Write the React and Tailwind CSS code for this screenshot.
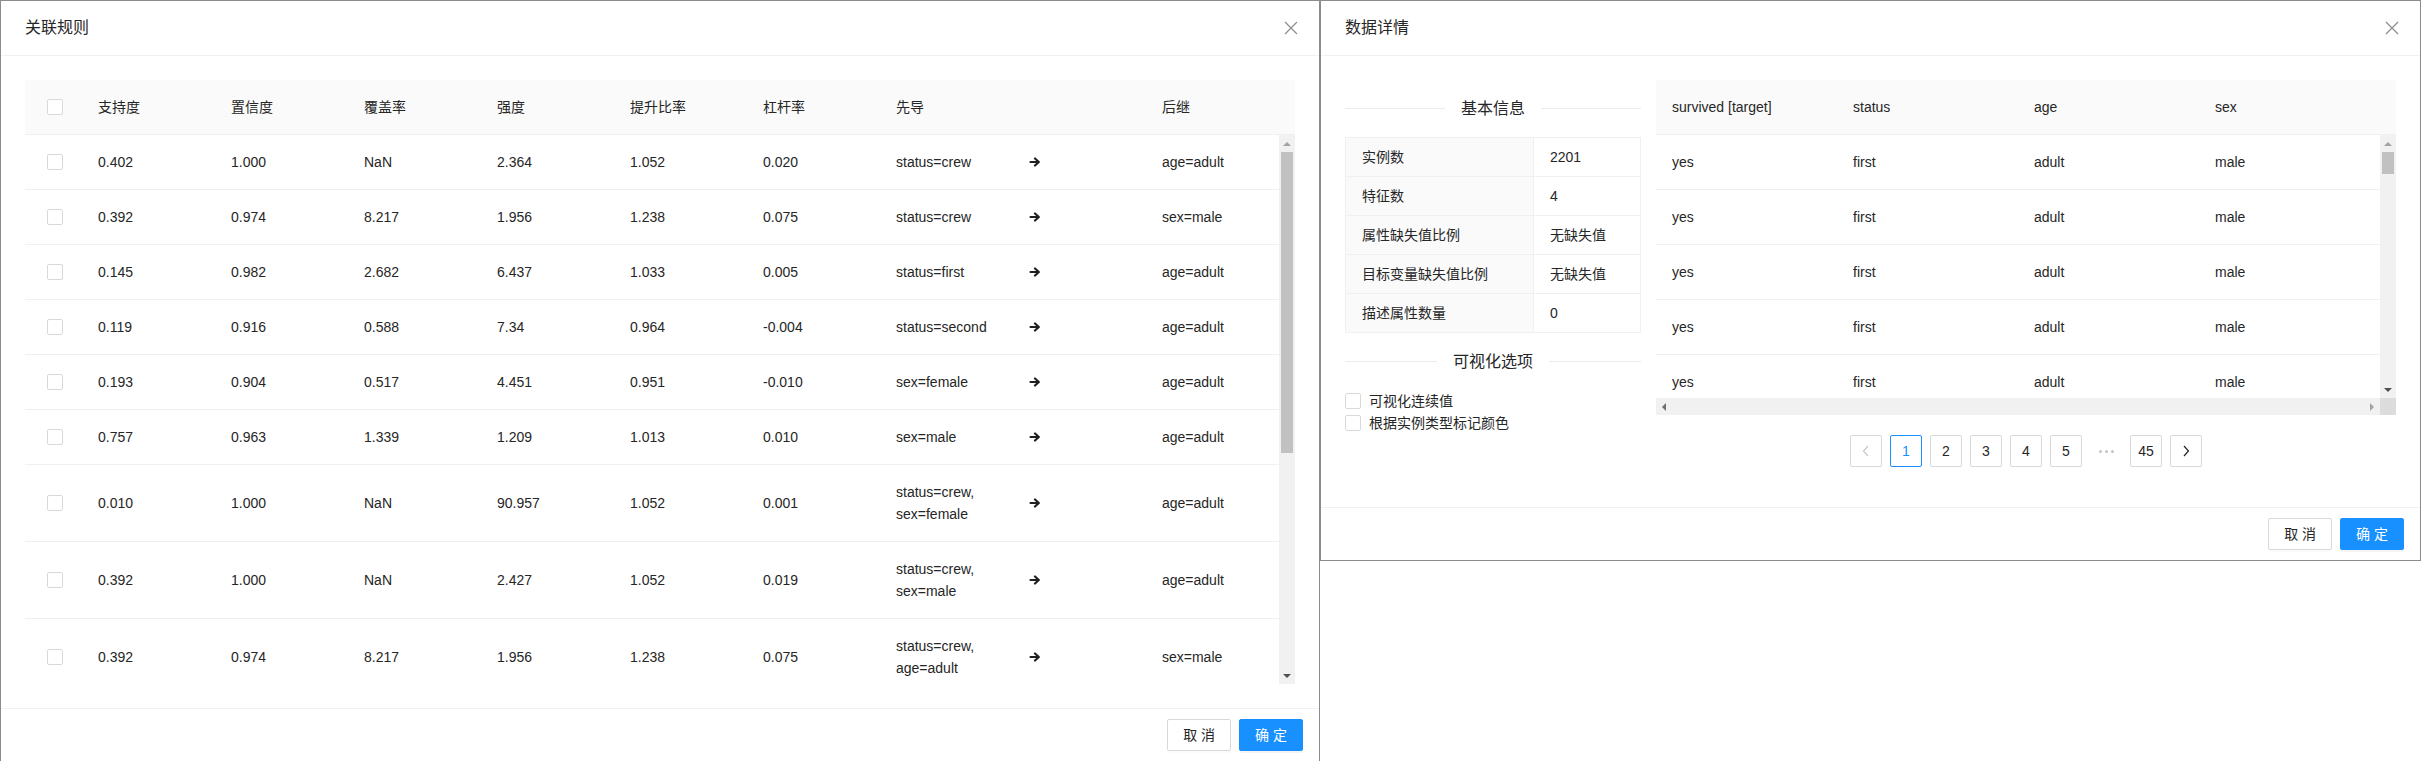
import React from "react";

const leftCols = ["支持度", "置信度", "覆盖率", "强度", "提升比率", "杠杆率", "先导", "", "后继"];

const leftRows = [
  ["0.402", "1.000", "NaN", "2.364", "1.052", "0.020", ["status=crew"], "age=adult"],
  ["0.392", "0.974", "8.217", "1.956", "1.238", "0.075", ["status=crew"], "sex=male"],
  ["0.145", "0.982", "2.682", "6.437", "1.033", "0.005", ["status=first"], "age=adult"],
  ["0.119", "0.916", "0.588", "7.34", "0.964", "-0.004", ["status=second"], "age=adult"],
  ["0.193", "0.904", "0.517", "4.451", "0.951", "-0.010", ["sex=female"], "age=adult"],
  ["0.757", "0.963", "1.339", "1.209", "1.013", "0.010", ["sex=male"], "age=adult"],
  ["0.010", "1.000", "NaN", "90.957", "1.052", "0.001", ["status=crew,", "sex=female"], "age=adult"],
  ["0.392", "1.000", "NaN", "2.427", "1.052", "0.019", ["status=crew,", "sex=male"], "age=adult"],
  ["0.392", "0.974", "8.217", "1.956", "1.238", "0.075", ["status=crew,", "age=adult"], "sex=male"],
];

const info = [
  ["实例数", "2201"],
  ["特征数", "4"],
  ["属性缺失值比例", "无缺失值"],
  ["目标变量缺失值比例", "无缺失值"],
  ["描述属性数量", "0"],
];

const dataCols = ["survived [target]", "status", "age", "sex"];
const dataRows = [1, 2, 3, 4, 5].map(() => ["yes", "first", "adult", "male"]);

const Check = () => (
  <span className="block h-4 w-4 shrink-0 rounded-[2px] border border-[#d9d9d9] bg-white" />
);

const CloseIcon = () => (
  <svg width="14" height="14" viewBox="0 0 14 14">
    <path d="M1 1L13 13M13 1L1 13" stroke="#8c8c8c" strokeWidth="1.2" fill="none" />
  </svg>
);

const Arrow = () => (
  <svg width="12" height="10" viewBox="0 0 12 10">
    <path d="M1.5 5H9" stroke="#1f1f1f" strokeWidth="2.2" strokeLinecap="round" />
    <path d="M6 1.5L9.8 5L6 8.5" stroke="#1f1f1f" strokeWidth="2.2" strokeLinecap="round" strokeLinejoin="round" fill="none" />
  </svg>
);

const UpTri = ({ dark }) => (
  <span
    className={`h-0 w-0 border-x-4 border-b-4 border-x-transparent ${dark ? "border-b-[#505050]" : "border-b-[#a3a3a3]"}`}
  />
);

const DownTri = ({ dark }) => (
  <span
    className={`h-0 w-0 border-x-4 border-t-4 border-x-transparent ${dark ? "border-t-[#505050]" : "border-t-[#a3a3a3]"}`}
  />
);

const VScroll = ({ thumbClass }) => (
  <div className="flex w-4 shrink-0 flex-col bg-[#f1f1f1]">
    <div className="flex h-[17px] items-center justify-center">
      <UpTri />
    </div>
    <div className="flex-1 px-[2px]">
      <div className={thumbClass} />
    </div>
    <div className="flex h-[17px] items-center justify-center">
      <DownTri dark />
    </div>
  </div>
);

const ModalHeader = ({ title }) => (
  <div className="flex h-[55px] shrink-0 items-center justify-between border-b border-[#f0f0f0] pl-6">
    <h2 className="text-base font-normal text-[#262626]">{title}</h2>
    <button className="flex h-[54px] w-14 items-center justify-center">
      <CloseIcon />
    </button>
  </div>
);

const ModalFooter = () => (
  <div className="flex shrink-0 justify-end gap-2 border-t border-[#f0f0f0] px-4 py-[10px]">
    <button className="h-8 rounded-[2px] border border-[#d9d9d9] bg-white px-[15px] text-sm text-[#262626] shadow-[0_2px_0_rgba(0,0,0,0.015)]">
      取 消
    </button>
    <button className="h-8 rounded-[2px] border border-[#1890ff] bg-[#1890ff] px-[15px] text-sm text-white shadow-[0_2px_0_rgba(0,0,0,0.045)]">
      确 定
    </button>
  </div>
);

const Divider = ({ children }) => (
  <div className="my-4 flex items-center">
    <div className="h-px flex-1 bg-[#ebebeb]" />
    <span className="px-4 text-base leading-[25px] text-[#262626]">{children}</span>
    <div className="h-px flex-1 bg-[#ebebeb]" />
  </div>
);

const PageItem = ({ children, active, className = "" }) => (
  <div
    className={`flex h-8 w-8 items-center justify-center rounded-[2px] border bg-white text-sm ${
      active ? "border-[#1890ff] text-[#1890ff]" : "border-[#d9d9d9] text-[#262626]"
    } ${className}`}
  >
    {children}
  </div>
);

function RulesModal() {
  return (
    <div className="flex w-[1320px] shrink-0 flex-col border-x border-t border-[#8c8c8c] bg-white">
      <ModalHeader title="关联规则" />
      <div className="p-6">
        <div className="flex h-[55px] border-b border-[#f0f0f0] bg-[#fafafa]">
          <div className="flex w-[57px] items-center pl-[22px]">
            <Check />
          </div>
          {leftCols.map((c, i) => (
            <div key={i} className="flex w-[133px] items-center px-4">
              {c}
            </div>
          ))}
          <div className="w-4" />
        </div>
        <div className="flex h-[549px] overflow-hidden">
          <div className="flex-1">
            {leftRows.map((r, i) => (
              <div key={i} className="flex border-b border-[#f0f0f0]">
                <div className="flex w-[57px] items-center pl-[22px]">
                  <Check />
                </div>
                {r.slice(0, 6).map((v, j) => (
                  <div key={j} className="flex w-[133px] items-center px-4 py-4">
                    {v}
                  </div>
                ))}
                <div className="flex w-[133px] flex-col justify-center px-4 py-4">
                  {r[6].map((l) => (
                    <span key={l}>{l}</span>
                  ))}
                </div>
                <div className="flex w-[133px] items-center px-4 py-4">
                  <Arrow />
                </div>
                <div className="flex w-[133px] items-center px-4 py-4">{r[7]}</div>
              </div>
            ))}
          </div>
          <VScroll thumbClass="h-[301px] w-full bg-[#c1c1c1]" />
        </div>
      </div>
      <ModalFooter />
    </div>
  );
}

function DataModal() {
  return (
    <div className="flex w-[1101px] shrink-0 flex-col border border-[#8c8c8c] bg-white">
      <ModalHeader title="数据详情" />
      <div className="flex gap-[15px] p-6">
        <div className="w-[296px] shrink-0">
          <Divider>基本信息</Divider>
          <div className="border border-[#f0f0f0]">
            {info.map(([k, v]) => (
              <div key={k} className="flex border-b border-[#f0f0f0] last:border-b-0">
                <div className="w-[188px] border-r border-[#f0f0f0] bg-[#fafafa] px-4 py-2">{k}</div>
                <div className="flex-1 px-4 py-2">{v}</div>
              </div>
            ))}
          </div>
          <Divider>可视化选项</Divider>
          <label className="flex items-center gap-2">
            <Check />
            <span>可视化连续值</span>
          </label>
          <label className="flex items-center gap-2">
            <Check />
            <span>根据实例类型标记颜色</span>
          </label>
        </div>
        <div className="flex-1">
          <div className="flex h-[55px] border-b border-[#f0f0f0] bg-[#fafafa]">
            {dataCols.map((c) => (
              <div key={c} className="flex w-[181px] items-center px-4">
                {c}
              </div>
            ))}
            <div className="w-4" />
          </div>
          <div className="flex h-[263px] overflow-hidden">
            <div className="flex-1">
              {dataRows.map((r, i) => (
                <div key={i} className="flex border-b border-[#f0f0f0]">
                  {r.map((v, j) => (
                    <div key={j} className="w-[181px] px-4 py-4">
                      {v}
                    </div>
                  ))}
                </div>
              ))}
            </div>
            <VScroll thumbClass="h-[22px] w-full bg-[#c1c1c1]" />
          </div>
          <div className="flex h-[17px]">
            <div className="flex flex-1 items-center justify-between bg-[#f1f1f1] px-[6px]">
              <span className="h-0 w-0 border-y-4 border-r-4 border-y-transparent border-r-[#6e6e6e]" />
              <span className="h-0 w-0 border-y-4 border-l-4 border-y-transparent border-l-[#a3a3a3]" />
            </div>
            <div className="w-4 bg-[#dcdcdc]" />
          </div>
          <div className="mb-4 mt-5 flex justify-center gap-2">
            <PageItem>
              <svg width="10" height="12" viewBox="0 0 10 12">
                <path d="M7 1L2.5 6L7 11" stroke="#c8c8c8" strokeWidth="1.2" fill="none" />
              </svg>
            </PageItem>
            <PageItem active>1</PageItem>
            <PageItem>2</PageItem>
            <PageItem>3</PageItem>
            <PageItem>4</PageItem>
            <PageItem>5</PageItem>
            <div className="flex h-8 w-8 items-center justify-center gap-[3px]">
              <span className="h-[3px] w-[3px] rounded-full bg-[#c4c4c4]" />
              <span className="h-[3px] w-[3px] rounded-full bg-[#c4c4c4]" />
              <span className="h-[3px] w-[3px] rounded-full bg-[#c4c4c4]" />
            </div>
            <PageItem>45</PageItem>
            <PageItem>
              <svg width="10" height="12" viewBox="0 0 10 12">
                <path d="M3 1L7.5 6L3 11" stroke="#262626" strokeWidth="1.2" fill="none" />
              </svg>
            </PageItem>
          </div>
        </div>
      </div>
      <ModalFooter />
    </div>
  );
}

export default function App() {
  return (
    <div className="flex h-[762px] w-[2423px] items-start overflow-hidden bg-white font-['Liberation_Sans','Noto_Sans_CJK_SC',sans-serif] text-sm leading-[22px] text-[#262626]">
      <RulesModal />
      <DataModal />
    </div>
  );
}
